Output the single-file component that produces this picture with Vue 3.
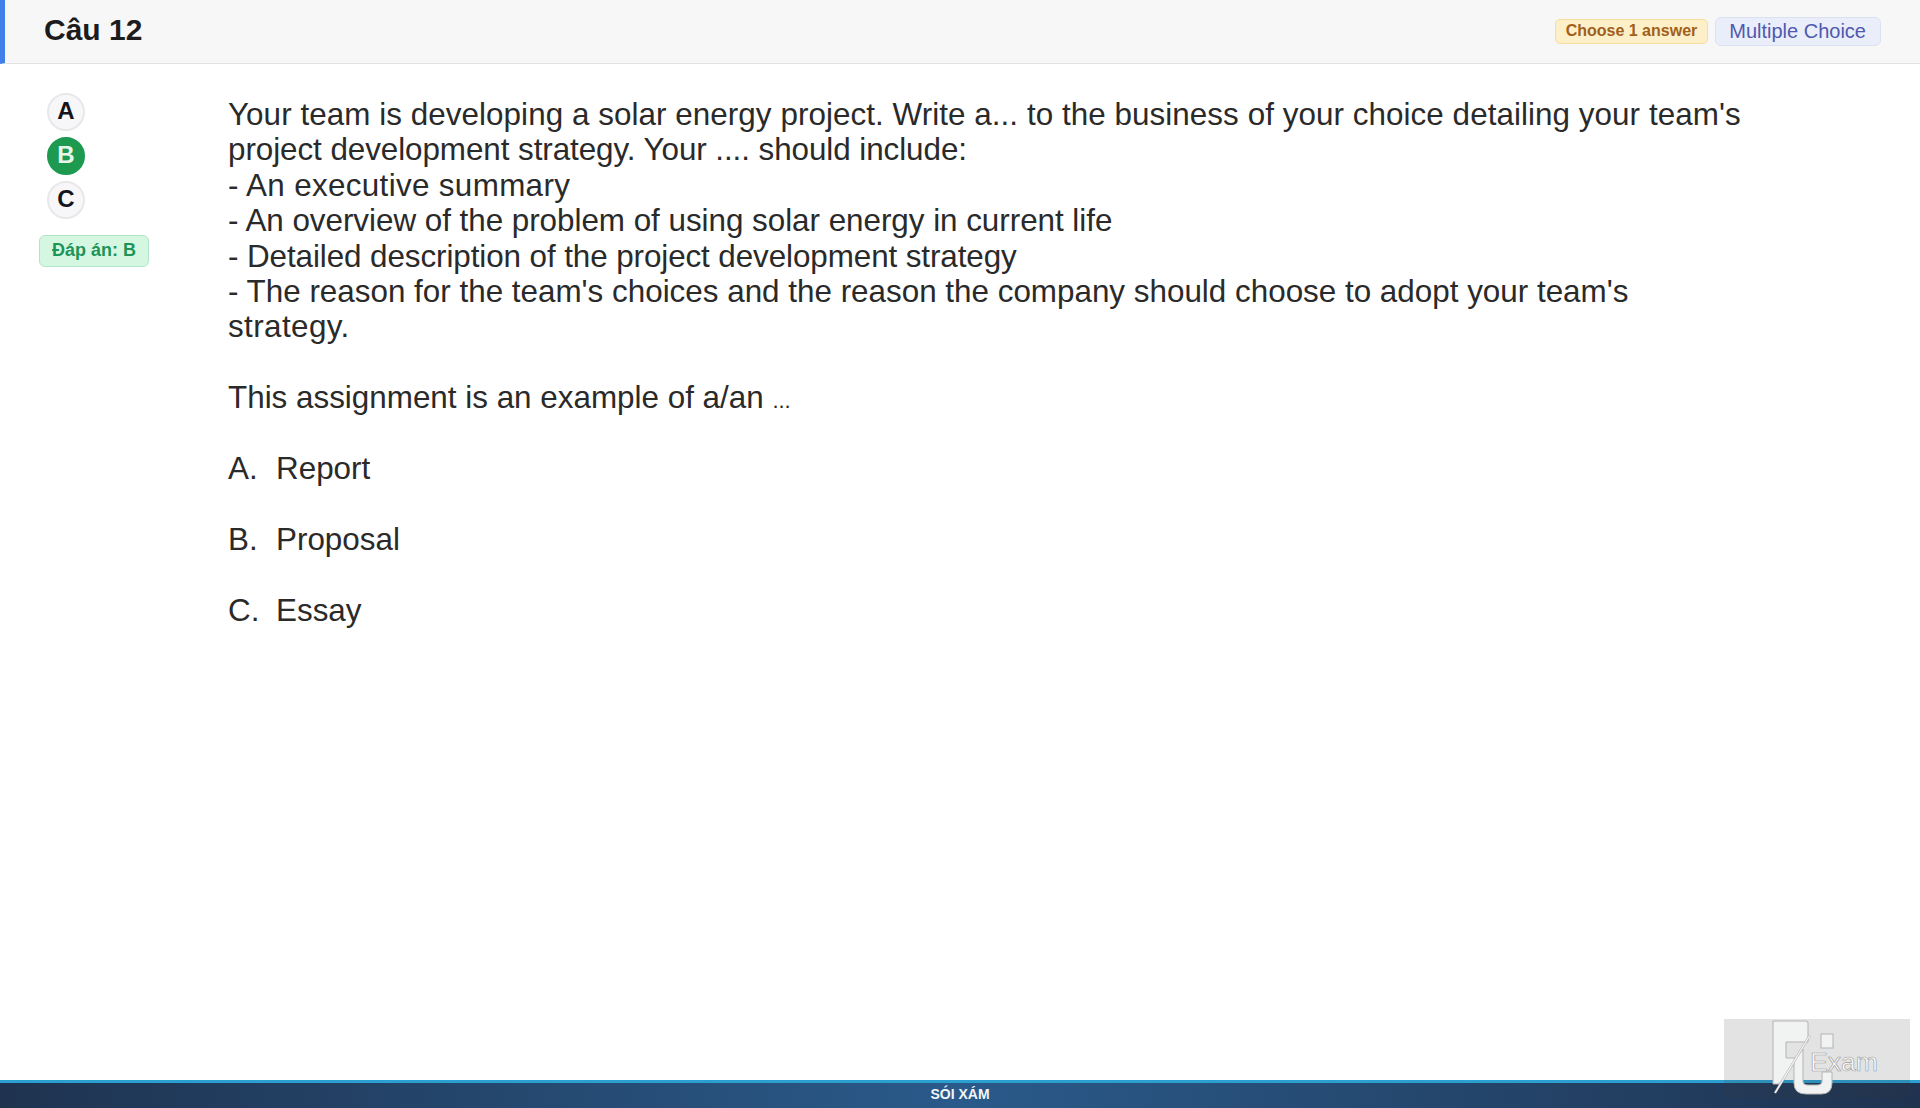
<template>
  <div class="page">
    <header class="top-bar">
      <h1 class="title">Câu 12</h1>
      <div class="tags">
        <span class="tag-choose">Choose 1 answer</span>
        <span class="tag-type">Multiple Choice</span>
      </div>
    </header>

    <main class="content">
      <aside class="answers">
        <span
          v-for="opt in options"
          :key="opt"
          class="bubble"
          :class="{ correct: opt === answer }"
        >{{ opt }}</span>
        <span class="answer-tag">Đáp án: {{ answer }}</span>
      </aside>

      <section class="question">
        <p
          v-for="line in intro"
          :key="line.text"
          class="line"
          :style="{ letterSpacing: line.track + 'px' }"
        >{{ line.text }}</p>
        <p class="line prompt">This assignment is an example of a/an <span class="dots">...</span></p>
        <p v-for="c in choices" :key="c.key" class="choice">
          <span class="choice-key">{{ c.key }}.</span>{{ c.text }}
        </p>
      </section>
    </main>

    <footer class="bottom-bar">SÓI XÁM</footer>

    <!-- watermark over the footer -->
    <div class="watermark">
      <svg width="186" height="79" viewBox="0 0 186 79">
        <g fill="#f1f2f2" stroke="#b4b4b4" stroke-width="1">
          <path d="M49 2 H82 Q84 2 84 4 V23 H62 V39 H74 L55 65 H49 Z" />
          <path d="M70 42 L79 30 V62 Q79 66 84 66 H93 Q98 66 98 62 V53 H108 V64 Q108 75 97 75 H82 Q70 75 70 64 Z" />
          <rect x="97" y="15" width="12" height="14" />
        </g>
        <path d="M86 16 L51 74" stroke="#b4b4b4" stroke-width="2.4" />
        <path d="M86 16 L51 74" stroke="#f7f7f7" stroke-width="1.2" />
        <text x="86" y="52" class="exam" textLength="68" lengthAdjust="spacingAndGlyphs">Exam</text>
      </svg>
    </div>
  </div>
</template>

<script setup>
const options = ['A', 'B', 'C']
const answer = 'B'

const intro = [
  { text: "Your team is developing a solar energy project. Write a... to the business of your choice detailing your team's", track: 0.055 },
  { text: 'project development strategy. Your .... should include:', track: -0.07 },
  { text: '- An executive summary', track: 0.33 },
  { text: '- An overview of the problem of using solar energy in current life', track: -0.03 },
  { text: '- Detailed description of the project development strategy', track: -0.09 },
  { text: "- The reason for the team's choices and the reason the company should choose to adopt your team's", track: 0 },
  { text: 'strategy.', track: 0.4 }
]

const choices = [
  { key: 'A', text: 'Report' },
  { key: 'B', text: 'Proposal' },
  { key: 'C', text: 'Essay' }
]
</script>

<style>
html,
body {
  margin: 0;
  background: #fff;
}
</style>

<style scoped>
.page {
  position: relative;
  display: flex;
  flex-direction: column;
  height: 1108px;
  overflow: hidden;
  background: #fff;
  font-family: "Liberation Sans", Arial, sans-serif;
}

.top-bar {
  display: flex;
  align-items: center;
  justify-content: space-between;
  flex: none;
  box-sizing: border-box;
  height: 64px;
  padding: 0 39px 0 39px;
  background: #f7f7f7;
  border-left: 5px solid #3f80ea;
  border-bottom: 1px solid #e3e3e3;
}

.title {
  margin: 0 0 4px;
  font-size: 30px;
  font-weight: 700;
  color: #1c1c1e;
}

.tags {
  display: flex;
  align-items: center;
  gap: 7px;
}

.tag-choose {
  box-sizing: border-box;
  height: 25px;
  padding: 0 10px;
  line-height: 22px;
  font-size: 16px;
  font-weight: 700;
  color: #a0601c;
  background: #fdf0c8;
  border: 1px solid #f8dc9c;
  border-radius: 5px;
}

.tag-type {
  box-sizing: border-box;
  height: 29px;
  padding: 0 14px 0 13px;
  line-height: 27px;
  font-size: 20px;
  color: #5059ae;
  background: #e9eefa;
  border: 1px solid #dbe1f3;
  border-radius: 6px;
}

.content {
  display: flex;
  flex: 1;
  min-height: 0;
}

.answers {
  display: flex;
  flex-direction: column;
  align-items: flex-start;
  flex: none;
  width: 188px;
  box-sizing: border-box;
  padding: 29px 0 0 39px;
}

.bubble {
  display: flex;
  align-items: center;
  justify-content: center;
  box-sizing: border-box;
  width: 38px;
  height: 38px;
  margin: 0 0 6px 8px;
  padding-bottom: 2px;
  font-size: 24px;
  font-weight: 700;
  color: #14141c;
  background: #f7f7f9;
  border: 2px solid #e8e8ea;
  border-radius: 50%;
}

.bubble.correct {
  color: #e6f7ea;
  background: #1d9a50;
  border-color: #1d9a50;
}

.answer-tag {
  box-sizing: border-box;
  height: 32px;
  margin-top: 10px;
  padding: 0 12px;
  line-height: 28px;
  font-size: 18px;
  font-weight: 700;
  white-space: nowrap;
  color: #1e9458;
  background: #d5f7e2;
  border: 1px solid #b2e4c6;
  border-radius: 6px;
}

.question {
  flex: 1;
  padding: 33px 0 0 40px;
  color: #2a2a2a;
  font-size: 31.4px;
}

.line {
  margin: 0;
  height: 35.4px;
  line-height: 35.4px;
  white-space: nowrap;
}

.prompt {
  margin-top: 35px;
}

.dots {
  font-size: 22px;
}

.choice {
  margin: 35.6px 0 0;
  height: 35.3px;
  line-height: 35.3px;
}

.choice-key {
  display: inline-block;
  width: 48px;
}

.bottom-bar {
  flex: none;
  box-sizing: border-box;
  height: 28px;
  line-height: 23px;
  text-align: center;
  font-size: 14px;
  font-weight: 700;
  color: #f2f6fa;
  background: linear-gradient(90deg, #1f3350 0%, #2a5a8a 50%, #1f3350 100%);
  border-top: 3px solid #2a9fd0;
}

.watermark {
  position: absolute;
  left: 1724px;
  top: 1019px;
  width: 186px;
  height: 79px;
  background: rgba(60, 60, 60, 0.14);
}

.exam {
  font-family: "Liberation Sans", Arial, sans-serif;
  font-size: 25px;
  fill: #fafafa;
  stroke: #9c9c9c;
  stroke-width: 0.6px;
}
</style>
